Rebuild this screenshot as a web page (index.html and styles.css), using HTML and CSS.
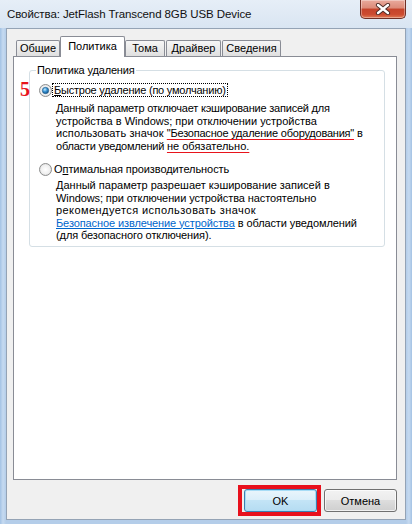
FILE: index.html
```html
<!DOCTYPE html>
<html lang="ru">
<head>
<meta charset="utf-8">
<title>Свойства: JetFlash Transcend 8GB USB Device</title>
<link rel="stylesheet" href="styles.css">
</head>
<body>
<div class="window">
  <div class="titlebar">
    <span class="title">Свойства: JetFlash Transcend 8GB USB Device</span>
    <div class="close">
      <svg width="16" height="12" viewBox="0 0 16 12">
        <path d="M3 2 L13 10 M13 2 L3 10" stroke="#4b2a26" stroke-width="4.2" stroke-linecap="round"/>
        <path d="M3 2 L13 10 M13 2 L3 10" stroke="#ffffff" stroke-width="2.4" stroke-linecap="round"/>
      </svg>
    </div>
  </div>
  <div class="client">
    <div class="tabs">
      <div class="tab t1">Общие</div>
      <div class="tab t2 active">Политика</div>
      <div class="tab t3">Тома</div>
      <div class="tab t4">Драйвер</div>
      <div class="tab t5">Сведения</div>
    </div>
    <div class="panel">
      <fieldset class="group">
        <legend>Политика удаления</legend>
        <div class="option first">
          <span class="mark">5</span>
          <div class="opt-head">
            <svg class="radio" width="13" height="13" viewBox="0 0 13 13">
              <defs>
                <radialGradient id="rb1" cx="0.5" cy="0.5" r="0.6">
                  <stop offset="0" stop-color="#ffffff"/>
                  <stop offset="0.6" stop-color="#f0f0f0"/>
                  <stop offset="1" stop-color="#cfcfcf"/>
                </radialGradient>
                <radialGradient id="dot" cx="0.4" cy="0.35" r="0.7">
                  <stop offset="0" stop-color="#c8ecff"/>
                  <stop offset="0.45" stop-color="#3d97d6"/>
                  <stop offset="1" stop-color="#0c4a80"/>
                </radialGradient>
              </defs>
              <circle cx="6.5" cy="6.5" r="6" fill="url(#rb1)" stroke="#8e8f8f"/>
              <circle cx="6.5" cy="6.5" r="3.2" fill="url(#dot)" stroke="#215a88" stroke-width="0.6"/>
            </svg>
            <span class="label focus tight"><u>Б</u>ыстрое удаление (по умолчанию)</span>
          </div>
          <p class="desc d1"><span class="tight">Данный параметр отключает кэширование записей для</span><br><span class="norm">устройства в Windows; при отключении устройства</span><br><span class="loose">использовать значок </span><span class="mark-line tight">"Безопасное удаление оборудования"</span> в<br><span class="tight">области уведомлений </span><span class="mark-line norm">не обязательно.</span></p>
        </div>
        <div class="option second">
          <div class="opt-head">
            <svg class="radio" width="13" height="13" viewBox="0 0 13 13">
              <defs>
                <radialGradient id="rb2" cx="0.5" cy="0.5" r="0.6">
                  <stop offset="0" stop-color="#ffffff"/>
                  <stop offset="0.6" stop-color="#f0f0f0"/>
                  <stop offset="1" stop-color="#cfcfcf"/>
                </radialGradient>
              </defs>
              <circle cx="6.5" cy="6.5" r="6" fill="url(#rb2)" stroke="#8e8f8f"/>
            </svg>
            <span class="label">О<u>п</u>тимальная производительность</span>
          </div>
          <p class="desc d2"><span class="norm">Данный параметр разрешает кэширование записей в</span><br>Windows; при отключении устройства настоятельно<br><span class="wide">рекомендуется использовать значок</span><br><a class="link" href="#">Безопасное извлечение устройства</a> в области уведомлений<br>(для безопасного отключения).</p>
        </div>
      </fieldset>
    </div>
    <div class="buttons">
      <div class="ok-wrap">
        <button class="btn default">OK</button>
        <span class="highlight"></span>
      </div>
      <button class="btn">Отмена</button>
    </div>
  </div>
</div>
</body>
</html>
```
FILE: styles.css
```css
* { box-sizing: border-box; }
html, body { margin: 0; padding: 0; }
body {
  width: 412px;
  height: 524px;
  overflow: hidden;
  font-family: "Liberation Sans", Arial, sans-serif;
  font-size: 11px;
  color: #000;
  background: #b9d1ea;
}
.window {
  width: 412px;
  height: 524px;
  display: flex;
  flex-direction: column;
  background: linear-gradient(90deg, #a3c2e4 0, #c6daf0 3px, #b4cde9 6px, #b4cde9 calc(100% - 6px), #c6daf0 calc(100% - 3px), #a3c2e4 100%);
}
.titlebar {
  height: 28px;
  flex: none;
  display: flex;
  justify-content: space-between;
  align-items: flex-start;
  padding-left: 7px;
  background: linear-gradient(#e6eef7, #d9e5f2);
}
.title {
  margin-top: 7px;
  font-size: 11.5px;
  letter-spacing: -0.1px;
  line-height: 14px;
  color: #111;
}
.close {
  width: 46px;
  height: 19px;
  margin-right: 6px;
  border: 1px solid #6f2f26;
  border-top: 0;
  border-radius: 0 0 5px 5px;
  background: linear-gradient(#e9aa9d 0, #dc8a78 45%, #c5432b 50%, #cc4b30 80%, #e07a55 100%);
  box-shadow: inset 0 0 0 1px rgba(255,255,255,0.35);
  display: flex;
  align-items: center;
  justify-content: center;
}
.close svg { display: block; }
.client {
  flex: none;
  margin: 0 6px;
  height: 492px;
  border: 1px solid #94a3b5;
  background: #f0f0f0;
  padding: 7px 8px 7px 6px;
}
.tabs {
  display: flex;
  align-items: flex-end;
  height: 20px;
  padding-left: 3px;
}
.tab {
  height: 16px;
  border: 1px solid #898c95;
  border-bottom: 0;
  border-radius: 2px 2px 0 0;
  background: linear-gradient(#f6f6f6, #ebebeb 50%, #dfdfdf);
  display: flex;
  align-items: center;
  justify-content: center;
  line-height: 13px;
}
.tab.active {
  height: 21px;
  margin-bottom: -1px;
  background: #fff;
  position: relative;
  z-index: 1;
  align-items: flex-start;
  padding-top: 3px;
}
.t1 { width: 44px; }
.t2 { width: 65px; }
.t3 { width: 40px; }
.t4 { width: 55px; margin-left: 1px; }
.t5 { width: 59px; margin-left: 1px; }
.panel {
  height: 424px;
  border: 1px solid #898c95;
  background: #fff;
  padding: 7px 11px 0 15px;
}
.group {
  margin: 0;
  padding: 0 10px 4px 9px;
  border: 1px solid #d5dfe5;
  border-radius: 3px;
}
.group legend {
  margin-left: -3px;
  padding: 0 1px;
  line-height: 13px;
  letter-spacing: -0.15px;
}
.option { position: relative; }
.opt-head {
  display: flex;
  align-items: center;
  height: 14px;
}
.first .opt-head { margin-top: 6px; }
.second .opt-head { margin-top: 10px; }
.radio { display: block; flex: none; }
.label {
  line-height: 12px;
  padding: 0 1px;
  border: 1px solid transparent;
  white-space: nowrap;
  letter-spacing: -0.08px;
}
.label.focus { border: 1px dotted #000; }
.label u { text-decoration: underline; text-underline-offset: 1px; }
.mark {
  position: absolute;
  left: -19px;
  top: -3px;
  font-family: "Liberation Serif", "Times New Roman", serif;
  font-weight: bold;
  font-size: 20px;
  line-height: 18px;
  color: #e8141c;
}
.desc {
  margin: 0 0 0 17px;
  line-height: 12.5px;
  white-space: nowrap;
  letter-spacing: -0.1px;
}
.d1 { margin-top: 5px; }
.d2 { margin-top: 3px; }
.tight { letter-spacing: -0.22px; }
.norm { letter-spacing: 0; }
.loose { letter-spacing: 0.1px; }
.wide { letter-spacing: 0.43px; }
.mark-line {
  text-decoration: underline;
  text-decoration-color: #e8141c;
  text-decoration-thickness: 1px;
  text-underline-offset: 2px;
}
.link { color: #0066cc; text-decoration: underline; }
.buttons {
  display: flex;
  justify-content: flex-end;
  gap: 7px;
  margin-top: 9px;
  height: 23px;
}
.ok-wrap { position: relative; }
.btn {
  display: block;
  width: 73px;
  height: 23px;
  padding: 0;
  border: 1px solid #707070;
  border-radius: 3px;
  background: linear-gradient(#f2f2f2 0, #ebebeb 50%, #dddddd 50%, #cfcfcf 100%);
  font-family: "Liberation Sans", Arial, sans-serif;
  font-size: 11px;
  color: #000;
  box-shadow: inset 0 0 0 1px rgba(255,255,255,0.7);
}
.btn.default {
  border-color: #3c7fb1;
  background: linear-gradient(#e9f5fc 0, #d9eefa 50%, #c3e4f6 50%, #b5dcf2 100%);
  box-shadow: inset 0 0 0 1px #a6dcf6;
}
.highlight {
  position: absolute;
  left: -6px;
  top: -4px;
  width: 83px;
  height: 31px;
  border: 4px solid #e8101c;
  pointer-events: none;
}
```
